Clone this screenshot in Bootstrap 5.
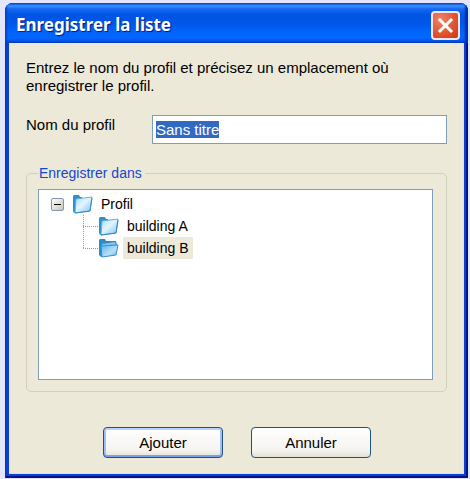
<!DOCTYPE html>
<html lang="fr">
<head>
<meta charset="utf-8">
<meta name="viewport" content="width=device-width, initial-scale=1">
<title>Enregistrer la liste</title>
<link href="https://cdn.jsdelivr.net/npm/bootstrap@5.3.0/dist/css/bootstrap.min.css" rel="stylesheet">
<style>
body { background: #e3e6fb; color: #000; font: 15px/18px "Liberation Sans", Arial, sans-serif; padding: 3px 2px 1px 5px; }
.xp-window { border-radius: 8px 8px 0 0; background: #0a3fd0; overflow: hidden; box-shadow: inset 1px 0 #0831c4, inset -2px -2px #00138c; padding: 0 4px 4px; }
.xp-title { height: 40px; margin: 0 -4px; padding: 4px 8px 0 11px; background: linear-gradient(#0a4fd0 0, #3c90ff 3px, #1468f0 6px, #0054e3 12px, #0056e8 20px, #0066ff 30px, #0064fa 36px, #0040c8 40px); box-shadow: inset 2px 0 2px #0840c8, inset -3px 0 2px #0030b0; }
.xp-title h1 { font: bold 17px/20px "Noto Sans", sans-serif; color: #fff; text-shadow: 1px 1px 1px #0a1883; }
.xp-close { width: 29px; height: 29px; border: 2px solid #f4e6f0; border-radius: 4px; background: radial-gradient(circle at 30% 25%, #ee8468, #e0512c 60%, #c83a14); }
.xp-body { background: #ece9d8; padding: 16px 17px 16px; box-shadow: inset 1px 0 #dfe5ef, inset -1px -1px #d6e0ee; }
.xp-label { width: 126px; line-height: 20px; }
.xp-input { height: 29px; border: 1px solid #7f9db9; border-radius: 0; background: #fff; color: #000; padding: 0 3px; font-size: 15px; }
.xp-input:focus { border-color: #7f9db9; box-shadow: none; color: #000; }
.xp-input::selection { background: #316ac5; color: #fff; }
.xp-group { border: 1px solid #d0d0bf; border-radius: 5px; padding: 7px 13px 11px 11px; margin-top: 20px; }
.xp-group legend { float: none; font-size: 14px; line-height: 18px; color: #1546cf; margin: 0; padding: 0 3px 0 1px; }
.xp-tree { background: #fff; border: 1px solid #7f9db9; padding: 3px 12px; min-height: 90px; font-size: 14px; }
.xp-node { height: 22px; gap: 8px; }
.xp-branch { margin-left: 32px; padding: 0; }
.xp-branch li { background: repeating-linear-gradient(90deg, #999 0 1px, transparent 1px 2px) 0 11px / 15px 1px no-repeat, repeating-linear-gradient(#999 0 1px, transparent 1px 2px) 0 0 / 1px 100% no-repeat; padding-left: 15px; }
.xp-branch li:last-child { background-size: 15px 1px, 1px 12px; }
.xp-branch .xp-node { gap: 4px; }
.xp-branch .xp-node span { padding: 0 4px; line-height: 22px; }
.xp-selected { background: #ece9d8; }
.xp-toggle { width: 13px; height: 13px; border: 1px solid #8297b3; border-radius: 2px; background: linear-gradient(135deg, #fff, #c9c4b6); }
.xp-button { width: 120px; height: 31px; border: 1px solid #24507f; border-radius: 4px; background: linear-gradient(#fff, #f5f4ef 75%, #e4e2d6); color: #000; font-size: 15px; line-height: 18px; padding: 0; }
.xp-default { box-shadow: inset 0 2px #b9d4fb, inset 0 -2px #7c9fea, inset 2px 0 #a0bff2, inset -2px 0 #a0bff2; }
.xp-actions { gap: 28px; padding: 35px 0 0 1px; }
</style>
</head>
<body class="vh-100 d-flex">
<main class="xp-window flex-grow-1 d-flex flex-column">
  <header class="xp-title d-flex align-items-center justify-content-between flex-shrink-0">
    <h1 class="m-0">Enregistrer la liste</h1>
    <button type="button" class="xp-close p-0 d-flex align-items-center justify-content-center" aria-label="Fermer">
      <svg width="17" height="17" viewBox="0 0 17 17" aria-hidden="true"><path d="M3 3L14 14M14 3L3 14" stroke="#fff" stroke-width="3" stroke-linecap="square"/></svg>
    </button>
  </header>
  <form class="xp-body flex-grow-1 d-flex flex-column">
    <p class="mb-3">Entrez le nom du profil et précisez un emplacement où<br>enregistrer le profil.</p>
    <div class="d-flex pt-1">
      <label for="nom" class="xp-label flex-shrink-0">Nom du profil</label>
      <input id="nom" type="text" class="form-control xp-input" value="Sans titre" autocomplete="off">
    </div>
    <fieldset class="xp-group flex-grow-1 d-flex flex-column">
      <legend class="w-auto">Enregistrer dans</legend>
      <ul class="xp-tree list-unstyled m-0 flex-grow-1" role="tree">
        <li role="treeitem" aria-expanded="true">
          <div class="xp-node d-flex align-items-center">
            <button type="button" class="xp-toggle p-0 d-flex align-items-center justify-content-center" aria-label="Réduire">
              <svg width="7" height="7" viewBox="0 0 7 7" aria-hidden="true"><path d="M0 3h7v1H0z" fill="#000"/></svg>
            </button>
            <svg width="21" height="21" viewBox="0 0 21 21" aria-hidden="true"><use href="#folder"/></svg>
            <span>Profil</span>
          </div>
          <ul class="xp-branch list-unstyled" role="group">
            <li role="treeitem"><div class="xp-node d-flex align-items-center">
              <svg width="21" height="21" viewBox="0 0 21 21" aria-hidden="true"><use href="#folder"/></svg><span>building A</span></div></li>
            <li role="treeitem" aria-selected="true"><div class="xp-node d-flex align-items-center">
              <svg width="21" height="21" viewBox="0 0 21 21" aria-hidden="true"><use href="#folder-open"/></svg><span class="xp-selected">building B</span></div></li>
          </ul>
        </li>
      </ul>
    </fieldset>
    <div class="xp-actions d-flex justify-content-center">
      <button type="submit" class="btn xp-button xp-default">Ajouter</button>
      <button type="button" class="btn xp-button">Annuler</button>
    </div>
  </form>
</main>
<svg width="0" height="0" class="position-absolute" aria-hidden="true">
  <defs>
    <linearGradient id="sheet" x1="0" y1="0" x2="1" y2="1"><stop offset="0" stop-color="#a9dcfa"/><stop offset=".45" stop-color="#e2f5ff"/><stop offset="1" stop-color="#7fc0ee"/></linearGradient>
    <linearGradient id="front" x1="0" y1="0" x2="1" y2="1"><stop offset="0" stop-color="#5db4ea"/><stop offset=".6" stop-color="#b6e0fb"/><stop offset="1" stop-color="#62aee6"/></linearGradient>
    <symbol id="folder" viewBox="0 0 21 21">
      <path d="M1 2l1-1h5l1 2h2v2L4 19H2L1 17z" fill="#2c92cb"/>
      <path d="M4 5l16-2-2 14-15 2z" fill="url(#sheet)" stroke="#69afdc"/>
      <path d="M3 19l15-2 2-13" fill="none" stroke="#3188c5"/>
    </symbol>
    <symbol id="folder-open" viewBox="0 0 21 21">
      <path d="M1 2l1-1h5l1 2h10l1 4-2 9-14 3-2-2z" fill="#2c8bca"/>
      <path d="M4 6l13-2 1 4-13 3z" fill="#82c5ed"/>
      <path d="M3 8l17-1-2 10-14 2z" fill="url(#front)" stroke="#358fce"/>
    </symbol>
  </defs>
</svg>
<script src="https://cdn.jsdelivr.net/npm/bootstrap@5.3.0/dist/js/bootstrap.bundle.min.js"></script>
<script>
const nameField = document.getElementById('nom');
nameField.focus();
nameField.select();
</script>
</body>
</html>
